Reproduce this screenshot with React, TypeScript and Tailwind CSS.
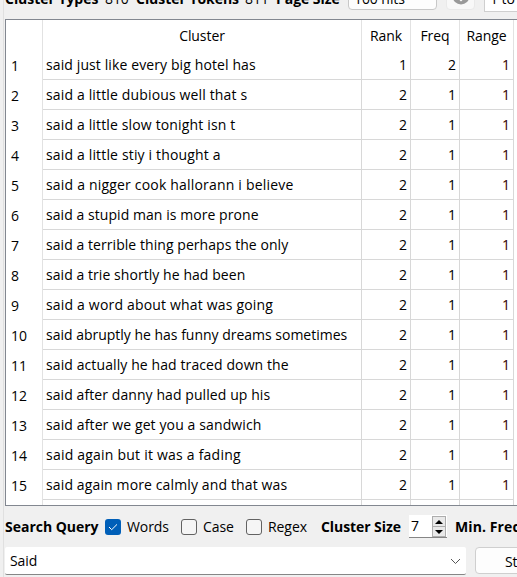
import React from "react";

const rows: [string, number, number, number, string][] = [
  ["said just like every big hotel has", 1, 2, 1, "tracking-[0.11px]"],
  ["said a little dubious well that s", 2, 1, 1, "tracking-[0.15px]"],
  ["said a little slow tonight isn t", 2, 1, 1, "tracking-[0.15px]"],
  ["said a little stiy i thought a", 2, 1, 1, "tracking-[0.16px]"],
  ["said a nigger cook hallorann i believe", 2, 1, 1, "tracking-[0.19px]"],
  ["said a stupid man is more prone", 2, 1, 1, "tracking-[0.06px]"],
  ["said a terrible thing perhaps the only", 2, 1, 1, "tracking-[0.06px]"],
  ["said a trie shortly he had been", 2, 1, 1, "tracking-[0.06px]"],
  ["said a word about what was going", 2, 1, 1, "tracking-[0.18px]"],
  ["said abruptly he has funny dreams sometimes", 2, 1, 1, "tracking-[-0.01px]"],
  ["said actually he had traced down the", 2, 1, 1, "tracking-[0.1px]"],
  ["said after danny had pulled up his", 2, 1, 1, "tracking-[0.08px]"],
  ["said after we get you a sandwich", 2, 1, 1, "tracking-[0.12px]"],
  ["said again but it was a fading", 2, 1, 1, "tracking-[0.22px]"],
  ["said again more calmly and that was", 2, 1, 1, "tracking-[0.13px]"],
];

const grid = "grid shrink-0 grid-cols-[37px_319px_49px_49px_54px]";
const headCell = "flex items-center justify-center border-r border-[#e2e2e2] pt-px";
const cell = "flex items-center border-r border-b border-[#d8d8d8]";

function Check({ checked = false }: { checked?: boolean }) {
  return (
    <span
      className={
        checked
          ? "flex size-4 items-center justify-center rounded-[3px] bg-[#005fb8]"
          : "size-4 rounded-[3px] border border-[#626262] bg-[#f5f5f5]"
      }
    >
      {checked && (
        <svg width="10" height="8" viewBox="0 0 10 8" fill="none" stroke="white" strokeWidth="1">
          <path d="M1 4L3.7 6.7L9 1.4" />
        </svg>
      )}
    </span>
  );
}

export default function App() {
  return (
    <div className="flex h-[577px] w-[517px] overflow-hidden bg-[#f0f0f0] font-['Open_Sans','Noto_Sans',sans-serif] text-[14px] leading-5 tracking-[-0.07px] whitespace-nowrap text-black">
      <div className="w-1 shrink-0 border-r border-[#e0e0e0]" />
      <div className="flex w-[513px] shrink-0 flex-col pl-px">
        <div className="flex h-[19px] shrink-0 items-start overflow-hidden">
          <div className="-mt-[11px] flex w-[343px] shrink-0">
            <b className="w-[100px] tracking-[-0.04px]">Cluster Types</b>
            <span className="w-[31px]">810</span>
            <b className="w-[109px] tracking-[-0.04px]">Cluster Tokens</b>
            <span className="w-[31px]">811</span>
            <b className="tracking-[-0.04px]">Page Size</b>
          </div>
          <div className="-mt-[18px] h-7 w-[89px] shrink-0 rounded-sm border border-[#c8c8c8] bg-[#fdfdfd] pt-1.5 pl-[5px]">100 hits</div>
          <div className="-mt-[18px] ml-[9px] flex h-7 w-[29px] shrink-0 items-end justify-center rounded border border-[#e9e9e9] bg-[#f8f8f8] pb-1">
            <svg width="18" height="18" viewBox="0 0 18 18">
              <circle cx="9" cy="9" r="8.5" fill="#999" />
              <path d="M7.5 3h3v6h4L9 14.5L3.5 9h4Z" fill="white" />
            </svg>
          </div>
          <div className="-mt-[18px] ml-[9px] h-[30px] w-20 shrink-0 border border-[#cfcfcf] bg-white pt-1.5 pl-[5px]">1 to</div>
        </div>

        <div className="flex h-[487px] shrink-0 flex-col overflow-hidden border-y border-l border-[#828790] bg-white">
          <div className={`${grid} h-[30px]`}>
            <div className="border-r border-[#e2e2e2]" />
            <div className={headCell}>Cluster</div>
            <div className={headCell}>Rank</div>
            <div className={headCell}>Freq</div>
            <div className={headCell}>Range</div>
          </div>
          {rows.map(([text, rank, freq, range, tracking], i) => (
            <div key={text} className={`${grid} h-[30px]`}>
              <div className="flex items-center border-r border-[#e2e2e2] pt-px pl-[5px]">{i + 1}</div>
              <div className={`${cell} pl-[3px] ${tracking}`}>{text}</div>
              <div className={`${cell} justify-end pr-[3px]`}>{rank}</div>
              <div className={`${cell} justify-end pr-[3px]`}>{freq}</div>
              <div className={`${cell} justify-end pr-[3px] text-[#300]`}>{range}</div>
            </div>
          ))}
          <div className={`${grid} h-[30px]`}>
            <div className="border-r border-[#e2e2e2]" />
            <div className={cell} />
            <div className={cell} />
            <div className={cell} />
            <div className={cell} />
          </div>
        </div>

        <div className="flex h-[41px] shrink-0 items-center">
          <b className="w-[100px] shrink-0 tracking-[-0.02px]">Search Query</b>
          <div className="flex w-[76px] shrink-0 items-center gap-1.5"><Check checked />Words</div>
          <div className="flex w-[65px] shrink-0 items-center gap-1.5"><Check />Case</div>
          <div className="flex w-[75px] shrink-0 items-center gap-1.5"><Check />Regex</div>
          <b className="w-[88px] shrink-0 tracking-[-0.08px]">Cluster Size</b>
          <div className="flex h-[23px] w-[38px] shrink-0 border-b border-[#868686] bg-white pl-0.5">
            <span className="w-[21px] pt-px">7</span>
            <div className="mt-px flex h-[21px] w-[14px] flex-col border border-[#adadad] bg-[#e9e9e9]">
              <svg width="12" height="19" viewBox="0 0 12 19">
                <path d="M2 7L6 3L10 7ZM2 13H10L6 17Z" fill="black" />
                <path d="M0 9.5H12" stroke="#adadad" />
              </svg>
            </div>
          </div>
          <b className="ml-2 tracking-[0.1px]">Min. Freq</b>
        </div>

        <div className="flex h-7 shrink-0">
          <div className="flex w-[461px] shrink-0 items-center justify-between rounded-xs border-b border-[#868686] bg-white pt-px pr-[5px] pl-[5px]">
            <span>Said</span>
            <svg width="11" height="7" viewBox="0 0 11 7" fill="none" stroke="#555">
              <path d="M1 1L5.5 5.5L10 1" />
            </svg>
          </div>
          <div className="ml-[9px] flex h-[27px] w-24 shrink-0 items-center rounded border border-[#cfcfcf] bg-[#fdfdfd] pt-0.5 pl-[29px]">Start</div>
        </div>
      </div>
    </div>
  );
}
